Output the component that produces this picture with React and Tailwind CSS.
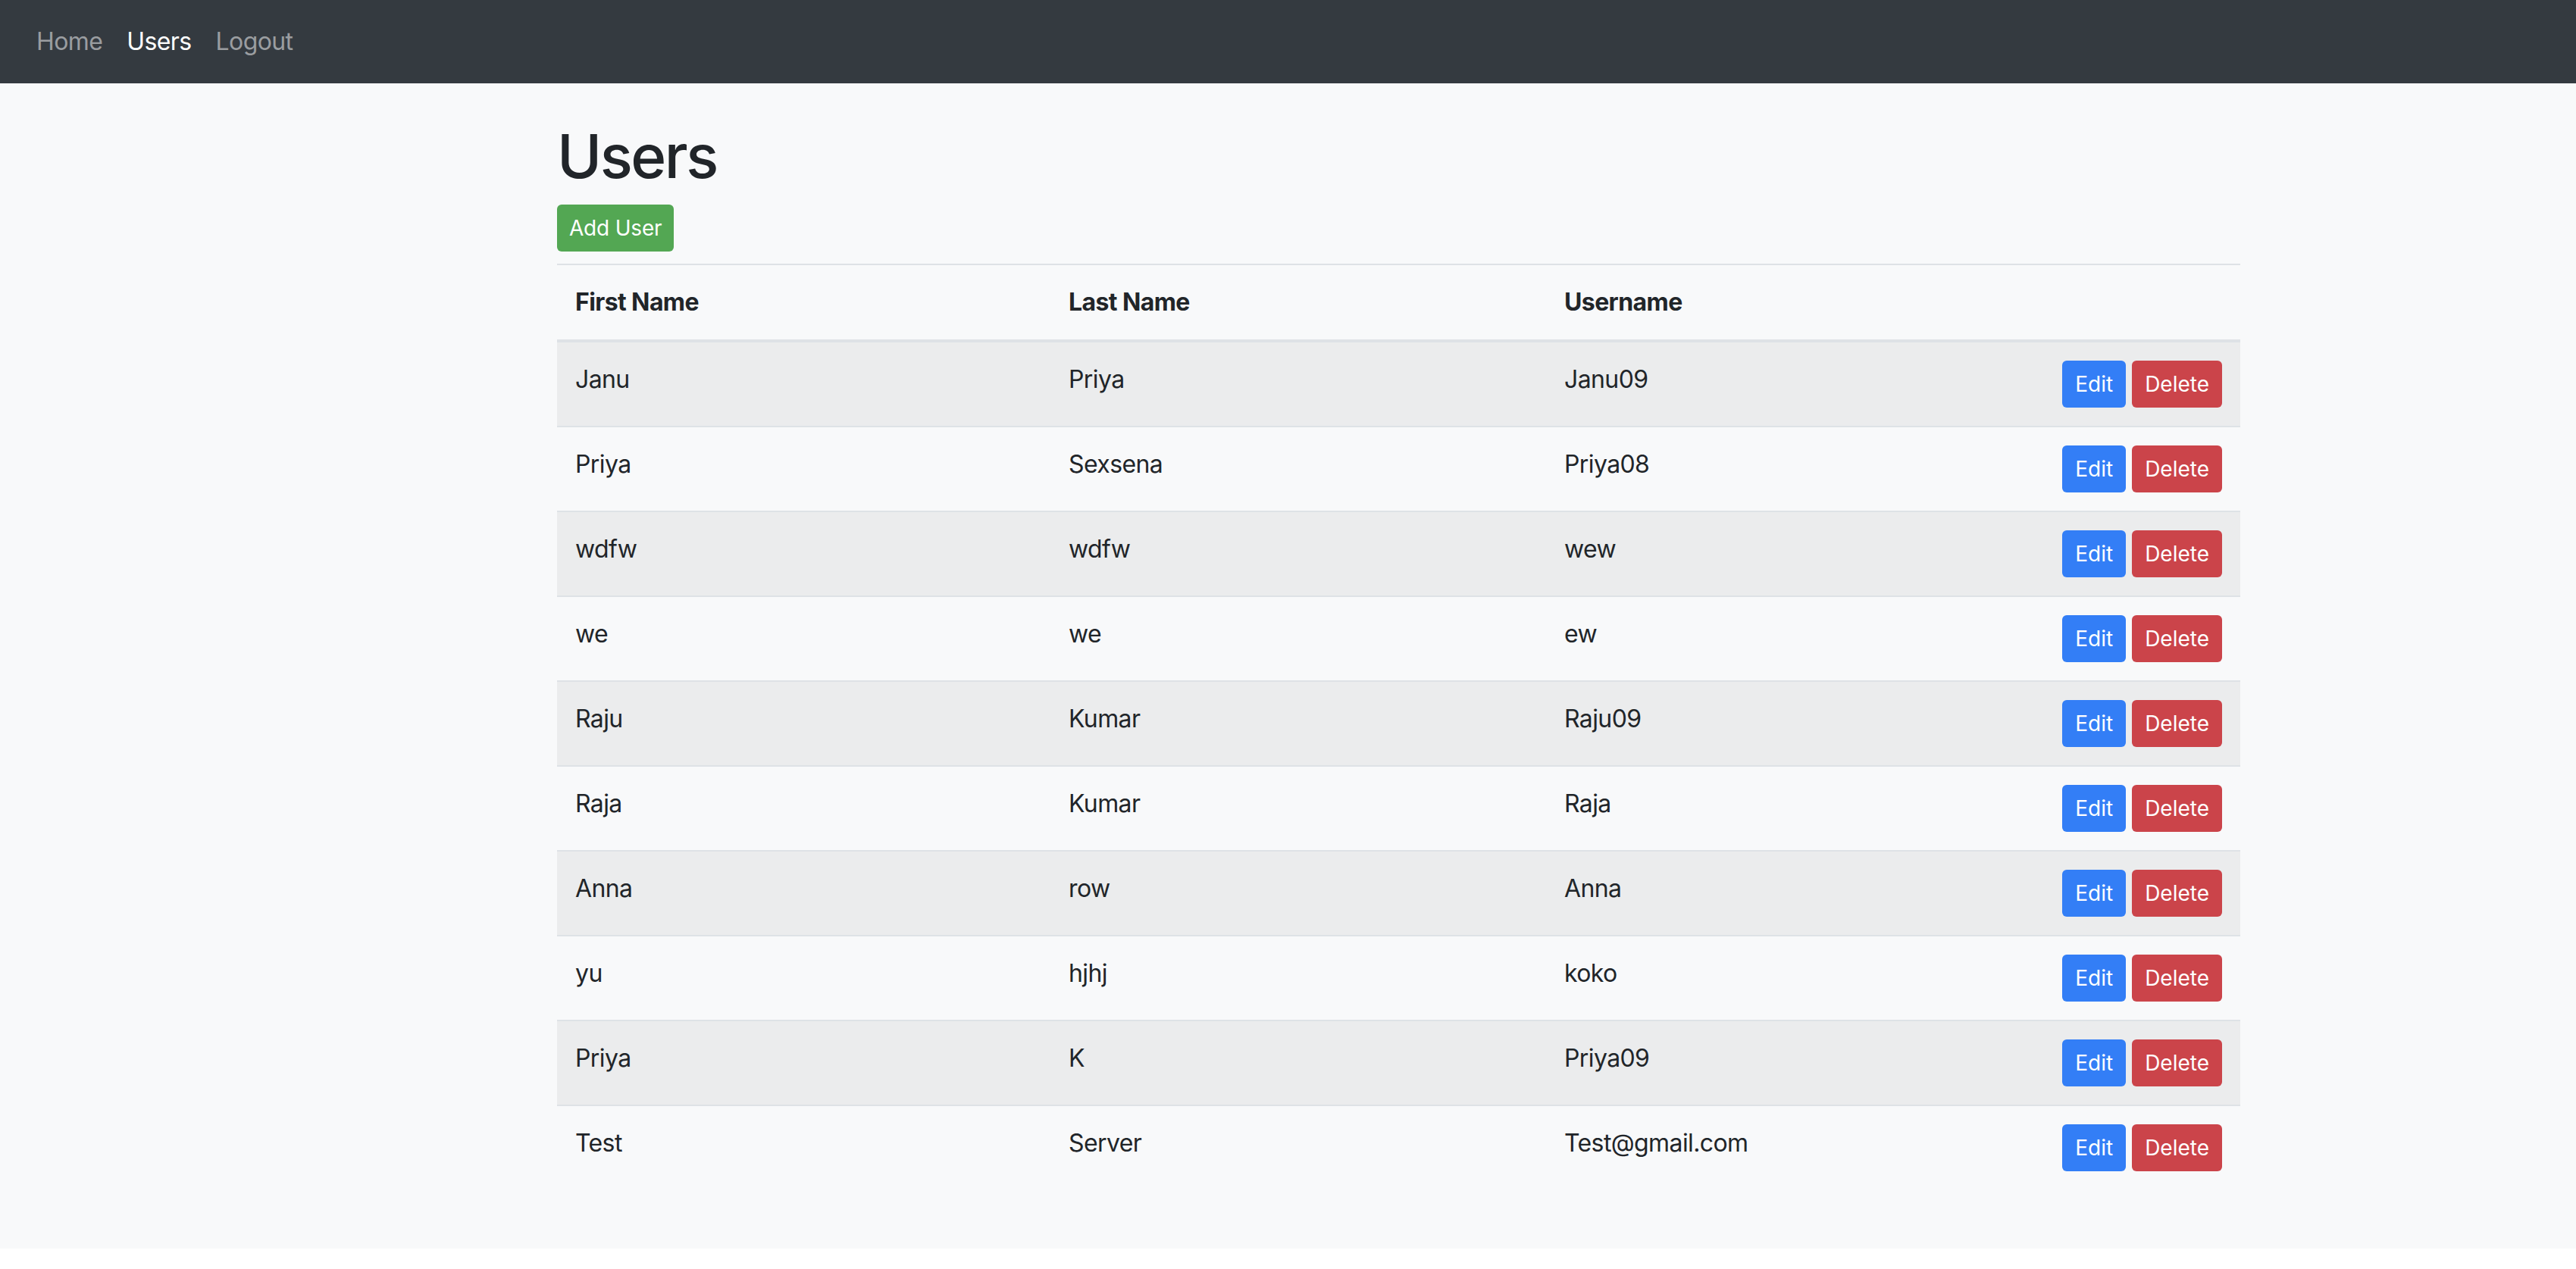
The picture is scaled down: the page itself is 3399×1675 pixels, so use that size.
import React from "react";

const users = [
  { first: "Janu", last: "Priya", username: "Janu09" },
  { first: "Priya", last: "Sexsena", username: "Priya08" },
  { first: "wdfw", last: "wdfw", username: "wew" },
  { first: "we", last: "we", username: "ew" },
  { first: "Raju", last: "Kumar", username: "Raju09" },
  { first: "Raja", last: "Kumar", username: "Raja" },
  { first: "Anna", last: "row", username: "Anna" },
  { first: "yu", last: "hjhj", username: "koko" },
  { first: "Priya", last: "K", username: "Priya09" },
  { first: "Test", last: "Server", username: "Test@gmail.com" },
];

const Navbar = () => (
  <nav className="h-[110px] bg-[#343a40] flex items-center px-[32px] tracking-[-0.6px]">
    <a href="#" className="px-[16px] text-[32px] leading-[48px] text-[#9a9da0]">
      Home
    </a>
    <a href="#" className="px-[16px] text-[32px] leading-[48px] text-white">
      Users
    </a>
    <a href="#" className="px-[16px] text-[32px] leading-[48px] text-[#9a9da0]">
      Logout
    </a>
  </nav>
);

const UserList = () => (
  <div className="w-[2221px] ml-[735px]">
    <h1 className="text-[80px] leading-[96px] font-medium mb-[16px] text-[#212529] tracking-[-2.5px]">Users</h1>
    <button className="block h-[62px] px-[16px] rounded-[6px] bg-[#53a753] text-white text-[28px] leading-[42px] mb-[16px] tracking-[-0.2px]">
      Add User
    </button>
    <table className="w-full table-fixed border-collapse mb-[32px] text-[32px] leading-[48px] text-[#212529] tracking-[-0.6px]">
      <colgroup>
        <col className="w-[651px]" />
        <col className="w-[654px]" />
        <col className="w-[600px]" />
        <col />
      </colgroup>
      <thead>
        <tr>
          <th className="text-left font-bold px-[24px] pt-[25px] pb-[25px] border-t-2 border-b-4 border-[#dee2e6]">First Name</th>
          <th className="text-left font-bold px-[24px] pt-[25px] pb-[25px] border-t-2 border-b-4 border-[#dee2e6]">Last Name</th>
          <th className="text-left font-bold px-[24px] pt-[25px] pb-[25px] border-t-2 border-b-4 border-[#dee2e6]">Username</th>
          <th className="px-[24px] pt-[25px] pb-[25px] border-t-2 border-b-4 border-[#dee2e6]"></th>
        </tr>
      </thead>
      <tbody>
        {users.map((u, i) => (
          <tr key={i} className={i % 2 === 0 ? "bg-[#ebeced]" : ""}>
            <td className="align-top px-[24px] pt-[25px] pb-[23px] border-t-2 border-[#dee2e6]">{u.first}</td>
            <td className="align-top px-[24px] pt-[25px] pb-[23px] border-t-2 border-[#dee2e6]">{u.last}</td>
            <td className="align-top px-[24px] pt-[25px] pb-[23px] border-t-2 border-[#dee2e6]">{u.username}</td>
            <td className="align-top px-[24px] py-[24px] border-t-2 border-[#dee2e6]">
              <div className="flex justify-end gap-[8px] tracking-normal">
                <button className="h-[62px] px-[17px] rounded-[6px] bg-[#337ef6] text-white text-[28px] leading-[42px]">
                  Edit
                </button>
                <button className="h-[62px] px-[17px] rounded-[6px] bg-[#cb444a] text-white text-[28px] leading-[42px]">
                  Delete
                </button>
              </div>
            </td>
          </tr>
        ))}
      </tbody>
    </table>
  </div>
);

export default function App() {
  return (
    <div className="min-h-[1675px] bg-white" style={{ fontFamily: "Inter, 'Noto Sans', sans-serif" }}>
      <Navbar />
      <main className="bg-[#f8f9fa] pt-[48px] pb-[46px]">
        <UserList />
      </main>
    </div>
  );
}
